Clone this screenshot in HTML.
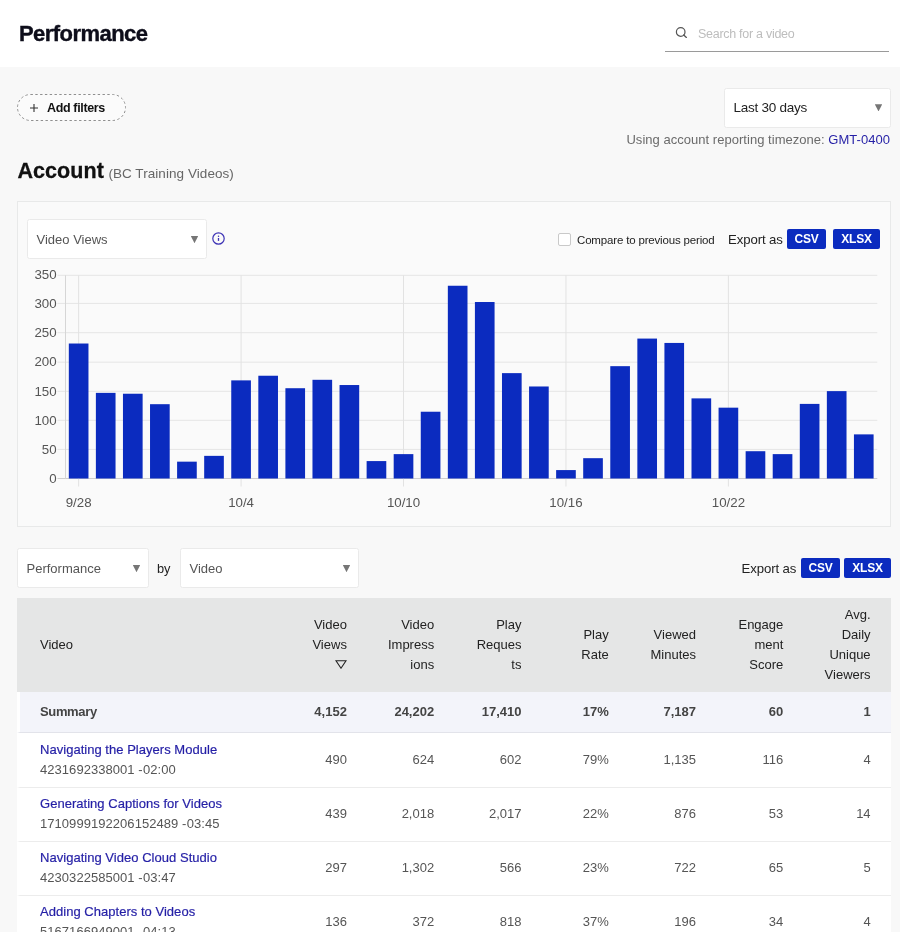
<!DOCTYPE html>
<html lang="en">
<head>
<meta charset="utf-8">
<title>Performance</title>
<style>
*{box-sizing:border-box;margin:0;padding:0}
html,body{width:900px;height:935px;overflow:hidden}
html{background:#f8f8f8}
body{will-change:transform}
body{background:#f8f8f8;font-family:"Liberation Sans",sans-serif;color:#222;position:relative;font-size:13.5px}
header{position:absolute;left:0;top:0;width:900px;height:67px;background:#fff}
h1{position:absolute;left:19px;top:19px;font-size:22px;line-height:30px;font-weight:700;letter-spacing:-.55px;color:#0d0d1a;-webkit-text-stroke:.4px #0d0d1a}
.search{position:absolute;left:665px;top:14px;width:224px;height:38px;border-bottom:1.5px solid #9a9a9a}
.search svg{position:absolute;left:10px;top:11.5px}
.search span{position:absolute;left:33px;top:11.5px;font-size:12.5px;line-height:16px;color:#bdbdbd;letter-spacing:-.28px}
.addf{position:absolute;left:17px;top:94px;width:109px;height:27px;border-radius:14px;background:#fbfbfb;font-size:12.5px;font-weight:700;line-height:28px;color:#111;padding-left:30px;letter-spacing:-.35px}
.addf svg.p{position:absolute;left:12px;top:8.5px}
.addf svg.b{position:absolute;left:0;top:0}
.sel{position:absolute;height:40px;background:#fff;border:1px solid #eaeaea;border-radius:2.5px;font-size:13px;line-height:40px;padding-left:8.5px;color:#555}
.sel i{position:absolute;right:7.8px;top:16px;width:7.4px;height:7.2px;background:#767676;clip-path:polygon(0 0,100% 0,50% 100%)}
.sel.d{line-height:38px}
.sel.d i{top:15.3px}
.tz{position:absolute;right:10px;top:131px;font-size:13px;line-height:18px;color:#6b6b6b;letter-spacing:.03px}
.tz a{color:#241fa6}
h2{position:absolute;left:17.5px;top:154px;font-size:21.5px;line-height:34px;font-weight:700;color:#111;letter-spacing:.05px;-webkit-text-stroke:.3px #111}
h2 small{font-size:13.5px;font-weight:400;color:#666;letter-spacing:.06px;-webkit-text-stroke:0;margin-left:-1.5px}
.panel{position:absolute;left:17px;top:201px;width:874px;height:326px;border:1px solid #e8e9e9;background:#fafafa}
.chart{position:absolute;left:0;top:0}
.al{font-family:"Liberation Sans",sans-serif;font-size:13.3px;fill:#555}
.cmp{position:absolute;left:558px;top:233px;font-size:11.5px;line-height:14px;color:#222;padding-left:19px;letter-spacing:-.17px}
.cmp b{position:absolute;left:0;top:0;width:13px;height:13px;border:1px solid #c9c9c9;border-radius:2px;background:#fff}
.exp{position:absolute;font-size:13.2px;line-height:20px;color:#222;letter-spacing:-.1px}
.btn{position:absolute;height:20px;background:#0b2bbf;color:#fff;border-radius:2px;font-size:12px;font-weight:700;line-height:21px;text-align:center;letter-spacing:-.25px}
.by{position:absolute;left:157px;top:559px;font-size:12.8px;line-height:20px;color:#222}
table{position:absolute;left:17px;top:598px;width:874px;border-collapse:separate;border-spacing:0;table-layout:fixed;background:#fff}
col.c0{width:263px}
th{background:#e5e6e6;height:94px;font-weight:400;font-size:13px;line-height:20px;text-align:right;padding:0 20.4px 0 0;color:#222;vertical-align:middle}
th.v{text-align:left;padding-left:23px}
td{font-size:13px;height:54px;padding:0 20.4px 0 0;text-align:right;color:#555;background:#fff;border-bottom:1px solid #ececec}
tr.s td{height:41px;background:#f3f4fa;font-weight:700;color:#444;border-bottom:1px solid #e2e3ea}
td.v{text-align:left;padding-left:20px;border-left:3px solid #fff;line-height:20px}
td.v a{display:block;color:#241fa6;-webkit-text-stroke:.2px #241fa6;letter-spacing:.03px}
td.v span{display:block;letter-spacing:.05px}
td.v em{font-style:normal;margin-left:-3.3px}
tr.r0 td{height:55px}
td.n{padding-bottom:2px}
tr.r1 td.v,tr.r2 td.v,tr.r3 td.v{padding-bottom:2px}
tr.s td{padding-bottom:1px}
tr.s td.v{letter-spacing:-.35px}
.fade{position:absolute;left:0;top:932px;width:900px;height:3px;background:#fff}
</style>
</head>
<body>
<header>
<h1>Performance</h1>
<div class="search"><svg width="14" height="14" viewBox="0 0 14 14"><circle cx="5.7" cy="6" r="4.3" fill="none" stroke="#555" stroke-width="1.2"/><path d="M8.7 9 L11.4 11.4" stroke="#555" stroke-width="1.3" stroke-linecap="round"/></svg><span>Search for a video</span></div>
</header>
<div class="addf"><svg class="b" width="109" height="27"><rect x=".5" y=".5" width="108" height="26" rx="13" fill="none" stroke="#8f8f8f" stroke-width="1" stroke-dasharray="2.4 2.4"/></svg><svg class="p" width="10" height="10" viewBox="0 0 10 10"><path d="M5 1v8M1 5h8" stroke="#333" stroke-width="1.1"/></svg>Add filters</div>
<div class="sel d" style="left:724px;top:88px;width:167px;color:#222;font-size:13.5px;letter-spacing:-.25px">Last 30 days<i></i></div>
<div class="tz">Using account reporting timezone: <a>GMT-0400</a></div>
<h2>Account <small>(BC Training Videos)</small></h2>
<section class="panel"></section>
<div class="sel" style="left:27px;top:219px;width:180px">Video Views<i></i></div>
<svg style="position:absolute;left:211px;top:231px" width="15" height="15" viewBox="0 0 15 15"><circle cx="7.5" cy="7.5" r="5.7" fill="none" stroke="#3d33b5" stroke-width="1.2"/><path d="M7.5 7v2.9" stroke="#3d33b5" stroke-width="1.3"/><circle cx="7.5" cy="5.2" r=".75" fill="#3d33b5"/></svg>
<div class="cmp"><b></b>Compare to previous period</div>
<div class="exp" style="left:728px;top:230px">Export as</div>
<div class="btn" style="left:787px;top:229px;width:39px">CSV</div>
<div class="btn" style="left:833px;top:229px;width:47px">XLSX</div>
<div style="position:absolute;left:17px;top:265px;width:873px;height:260px">
<svg class="chart" width="873" height="260" viewBox="17 265 873 260">
<line x1="57.5" x2="877.3" y1="478.50" y2="478.50" stroke="#cfcfcf" stroke-width="1"/>
<text x="56.6" y="483.00" text-anchor="end" class="al">0</text>
<line x1="57.5" x2="877.3" y1="449.40" y2="449.40" stroke="#e5e5e5" stroke-width="1"/>
<text x="56.6" y="453.90" text-anchor="end" class="al">50</text>
<line x1="57.5" x2="877.3" y1="420.30" y2="420.30" stroke="#e5e5e5" stroke-width="1"/>
<text x="56.6" y="424.80" text-anchor="end" class="al">100</text>
<line x1="57.5" x2="877.3" y1="391.30" y2="391.30" stroke="#e5e5e5" stroke-width="1"/>
<text x="56.6" y="395.80" text-anchor="end" class="al">150</text>
<line x1="57.5" x2="877.3" y1="362.20" y2="362.20" stroke="#e5e5e5" stroke-width="1"/>
<text x="56.6" y="366.30" text-anchor="end" class="al">200</text>
<line x1="57.5" x2="877.3" y1="332.70" y2="332.70" stroke="#e5e5e5" stroke-width="1"/>
<text x="56.6" y="336.80" text-anchor="end" class="al">250</text>
<line x1="57.5" x2="877.3" y1="303.40" y2="303.40" stroke="#e5e5e5" stroke-width="1"/>
<text x="56.6" y="307.50" text-anchor="end" class="al">300</text>
<line x1="57.5" x2="877.3" y1="275.30" y2="275.30" stroke="#e5e5e5" stroke-width="1"/>
<text x="56.6" y="279.40" text-anchor="end" class="al">350</text>
<line x1="65.5" x2="65.5" y1="275.3" y2="478.5" stroke="#d6d6d6" stroke-width="1"/>
<line x1="78.64" x2="78.64" y1="275.3" y2="486.5" stroke="#e2e2e2" stroke-width="1"/>
<text x="78.64" y="507.2" text-anchor="middle" class="al">9/28</text>
<line x1="241.08" x2="241.08" y1="275.3" y2="486.5" stroke="#e2e2e2" stroke-width="1"/>
<text x="241.08" y="507.2" text-anchor="middle" class="al">10/4</text>
<line x1="403.52" x2="403.52" y1="275.3" y2="486.5" stroke="#e2e2e2" stroke-width="1"/>
<text x="403.52" y="507.2" text-anchor="middle" class="al">10/10</text>
<line x1="565.96" x2="565.96" y1="275.3" y2="486.5" stroke="#e2e2e2" stroke-width="1"/>
<text x="565.96" y="507.2" text-anchor="middle" class="al">10/16</text>
<line x1="728.40" x2="728.40" y1="275.3" y2="486.5" stroke="#e2e2e2" stroke-width="1"/>
<text x="728.40" y="507.2" text-anchor="middle" class="al">10/22</text>
<rect x="68.81" y="343.52" width="19.66" height="134.98" fill="#0b2bbf"/>
<rect x="95.88" y="392.87" width="19.66" height="85.63" fill="#0b2bbf"/>
<rect x="122.96" y="393.74" width="19.66" height="84.76" fill="#0b2bbf"/>
<rect x="150.03" y="404.19" width="19.66" height="74.31" fill="#0b2bbf"/>
<rect x="177.10" y="461.66" width="19.66" height="16.84" fill="#0b2bbf"/>
<rect x="204.18" y="455.86" width="19.66" height="22.64" fill="#0b2bbf"/>
<rect x="231.25" y="380.38" width="19.66" height="98.12" fill="#0b2bbf"/>
<rect x="258.32" y="375.74" width="19.66" height="102.76" fill="#0b2bbf"/>
<rect x="285.40" y="388.22" width="19.66" height="90.28" fill="#0b2bbf"/>
<rect x="312.47" y="379.80" width="19.66" height="98.70" fill="#0b2bbf"/>
<rect x="339.54" y="385.03" width="19.66" height="93.47" fill="#0b2bbf"/>
<rect x="366.62" y="461.08" width="19.66" height="17.42" fill="#0b2bbf"/>
<rect x="393.69" y="454.12" width="19.66" height="24.38" fill="#0b2bbf"/>
<rect x="420.76" y="411.73" width="19.66" height="66.77" fill="#0b2bbf"/>
<rect x="447.84" y="285.75" width="19.66" height="192.75" fill="#0b2bbf"/>
<rect x="474.91" y="302.01" width="19.66" height="176.49" fill="#0b2bbf"/>
<rect x="501.98" y="373.13" width="19.66" height="105.37" fill="#0b2bbf"/>
<rect x="529.06" y="386.48" width="19.66" height="92.02" fill="#0b2bbf"/>
<rect x="556.13" y="470.08" width="19.66" height="8.42" fill="#0b2bbf"/>
<rect x="583.20" y="458.18" width="19.66" height="20.32" fill="#0b2bbf"/>
<rect x="610.28" y="366.16" width="19.66" height="112.34" fill="#0b2bbf"/>
<rect x="637.35" y="338.58" width="19.66" height="139.92" fill="#0b2bbf"/>
<rect x="664.42" y="342.94" width="19.66" height="135.56" fill="#0b2bbf"/>
<rect x="691.50" y="398.38" width="19.66" height="80.12" fill="#0b2bbf"/>
<rect x="718.57" y="407.67" width="19.66" height="70.83" fill="#0b2bbf"/>
<rect x="745.64" y="451.21" width="19.66" height="27.29" fill="#0b2bbf"/>
<rect x="772.72" y="454.12" width="19.66" height="24.38" fill="#0b2bbf"/>
<rect x="799.79" y="403.90" width="19.66" height="74.60" fill="#0b2bbf"/>
<rect x="826.86" y="391.12" width="19.66" height="87.38" fill="#0b2bbf"/>
<rect x="853.94" y="434.38" width="19.66" height="44.12" fill="#0b2bbf"/>
</svg>
</div>
<div class="sel" style="left:17px;top:548px;width:132px">Performance<i></i></div>
<div class="by">by</div>
<div class="sel" style="left:180px;top:548px;width:179px">Video<i></i></div>
<div class="exp" style="left:741.5px;top:558.5px">Export as</div>
<div class="btn" style="left:801px;top:558px;width:39px">CSV</div>
<div class="btn" style="left:844px;top:558px;width:47px">XLSX</div>
<table>
<colgroup><col class="c0"><col><col><col><col><col><col><col></colgroup>
<thead><tr><th class="v">Video</th><th>Video<br>Views<br><svg width="12" height="9" viewBox="0 0 12 9" style="vertical-align:0"><path d="M1 .8h10L6 8.2z" fill="none" stroke="#222" stroke-width="1.1"/></svg></th><th>Video<br>Impress<br>ions</th><th>Play<br>Reques<br>ts</th><th>Play<br>Rate</th><th>Viewed<br>Minutes</th><th>Engage<br>ment<br>Score</th><th>Avg.<br>Daily<br>Unique<br>Viewers</th></tr></thead>
<tbody>
<tr class="s"><td class="v">Summary</td><td>4,152</td><td>24,202</td><td>17,410</td><td>17%</td><td>7,187</td><td>60</td><td>1</td></tr>
<tr class="r0"><td class="v"><a>Navigating the Players Module</a><span>4231692338001 - <em>02:00</em></span></td><td class="n">490</td><td class="n">624</td><td class="n">602</td><td class="n">79%</td><td class="n">1,135</td><td class="n">116</td><td class="n">4</td></tr>
<tr class="r1"><td class="v"><a>Generating Captions for Videos</a><span>1710999192206152489 - <em>03:45</em></span></td><td class="n">439</td><td class="n">2,018</td><td class="n">2,017</td><td class="n">22%</td><td class="n">876</td><td class="n">53</td><td class="n">14</td></tr>
<tr class="r2"><td class="v"><a>Navigating Video Cloud Studio</a><span>4230322585001 - <em>03:47</em></span></td><td class="n">297</td><td class="n">1,302</td><td class="n">566</td><td class="n">23%</td><td class="n">722</td><td class="n">65</td><td class="n">5</td></tr>
<tr class="r3"><td class="v"><a>Adding Chapters to Videos</a><span>5167166949001 - <em>04:13</em></span></td><td class="n">136</td><td class="n">372</td><td class="n">818</td><td class="n">37%</td><td class="n">196</td><td class="n">34</td><td class="n">4</td></tr>
</tbody>
</table>
<div class="fade"></div>
</body>
</html>
